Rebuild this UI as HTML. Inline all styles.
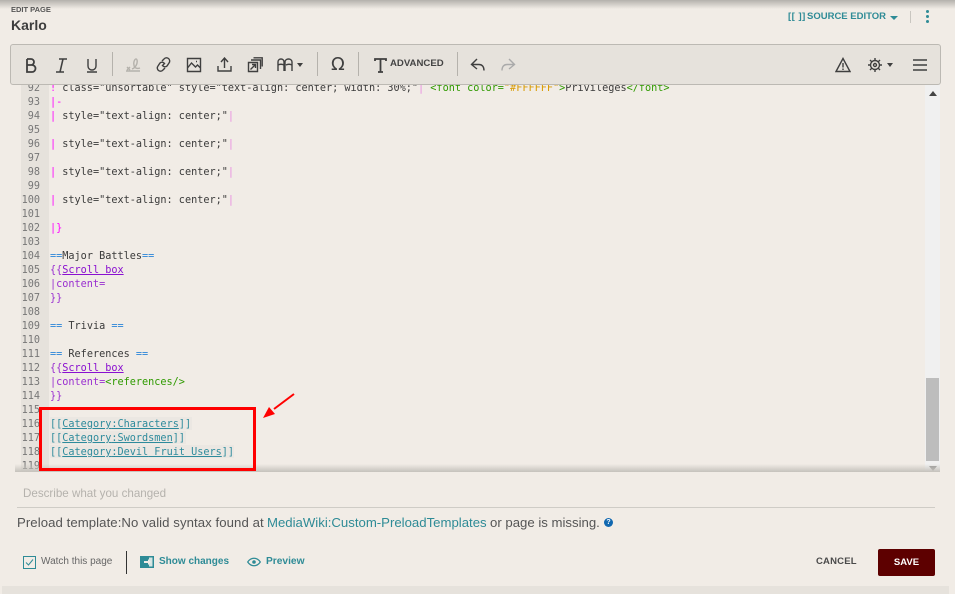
<!DOCTYPE html>
<html><head><meta charset="utf-8">
<style>
html,body{margin:0;padding:0}
body{width:955px;height:594px;overflow:hidden;background:#f1ece6;position:relative;font-family:"Liberation Sans",sans-serif;color:#4a4a4a}
.a{position:absolute;white-space:nowrap}
#code{position:absolute;left:21px;top:84px;width:905px;height:387px;overflow:hidden;font:10.2px/14px "DejaVu Sans Mono",monospace;color:#3a3a3a}
#gut{position:absolute;left:0;top:0;width:28px;height:387px;background:#e6e2dc}
.l{position:absolute;left:0;height:14px;white-space:pre;margin-top:2px}
.n{position:absolute;left:0;width:19px;text-align:right;color:#777}
.c{position:absolute;left:29px}
.m{color:#f0f}.p{color:#e98be0}.b{color:#2a85d8}.v{color:#9a2fd0}.vu{color:#8a10d0;text-decoration:underline}.g{color:#2f9a00}.o{color:#d89a00}
.t{color:#2e8b9c}.tu{color:#2e8b9c;text-decoration:underline}
.s{background:repeating-linear-gradient(90deg,#e53935 0 2px,transparent 2px 4px) left 12px/100% 1px no-repeat}
svg{position:absolute;fill:none;stroke:#3f3f3f;stroke-width:1.4}
.sep{position:absolute;top:52px;width:1px;height:24px;background:#b5b2ac}
.pre{top:515px;font-size:13.18px;color:#555}
</style></head><body>
<div class="a" style="left:0;top:0;width:955px;height:9px;background:linear-gradient(#b4b1ac,#f1ece6)"></div>
<div class="a" style="left:11px;top:5px;font-size:7.5px;font-weight:bold;color:#555">EDIT PAGE</div>
<div class="a" style="left:11px;top:17px;font-size:14px;font-weight:bold;color:#3d3d3d">Karlo</div>
<div class="a" style="left:788px;top:11px;font-size:9.5px;font-weight:bold;color:#2e8b96;letter-spacing:.5px">[[ ]]</div>
<div class="a" style="left:807px;top:11px;font-size:9.5px;font-weight:bold;color:#2e8b96">SOURCE EDITOR</div>
<div class="a" style="left:890px;top:16px;border:4px solid transparent;border-top:4px solid #2e8b96;border-bottom:0"></div>
<div class="a" style="left:910px;top:11px;width:1px;height:12px;background:#c9c6c0"></div>
<div class="a" style="left:926px;top:10px;width:3px;height:3px;background:#2e8b96;border-radius:50%;box-shadow:0 5px #2e8b96,0 10px #2e8b96"></div>

<div id="code">
<div id="gut"></div>
<div class="l" style="top:-4px"><span class="n">92</span><span class="c"><span class="m">!</span> class="unsortable" style="text-align: center; width: 30%;"<span class="p">|</span> <span class="g">&lt;font</span> <span class="g">color=</span><span class="o">"#FFFFFF"</span><span class="g">&gt;</span>Privileges<span class="g">&lt;/font&gt;</span></span></div>
<div class="l" style="top:10px"><span class="n">93</span><span class="c"><span class="m">|-</span></span></div>
<div class="l" style="top:24px"><span class="n">94</span><span class="c"><span class="m">|</span> style="text-align: center;"<span class="p">|</span></span></div>
<div class="l" style="top:38px"><span class="n">95</span></div>
<div class="l" style="top:52px"><span class="n">96</span><span class="c"><span class="m">|</span> style="text-align: center;"<span class="p">|</span></span></div>
<div class="l" style="top:66px"><span class="n">97</span></div>
<div class="l" style="top:80px"><span class="n">98</span><span class="c"><span class="m">|</span> style="text-align: center;"<span class="p">|</span></span></div>
<div class="l" style="top:94px"><span class="n">99</span></div>
<div class="l" style="top:108px"><span class="n">100</span><span class="c"><span class="m">|</span> style="text-align: center;"<span class="p">|</span></span></div>
<div class="l" style="top:122px"><span class="n">101</span></div>
<div class="l" style="top:136px"><span class="n">102</span><span class="c"><span class="m">|}</span></span></div>
<div class="l" style="top:150px"><span class="n">103</span></div>
<div class="l" style="top:164px"><span class="n">104</span><span class="c"><span class="b">==</span>Major Battles<span class="b">==</span></span></div>
<div class="l" style="top:178px"><span class="n">105</span><span class="c"><span class="v">{{</span><span class="vu">Scroll box</span></span></div>
<div class="l" style="top:192px"><span class="n">106</span><span class="c"><span class="v">|content=</span></span></div>
<div class="l" style="top:206px"><span class="n">107</span><span class="c"><span class="v">}}</span></span></div>
<div class="l" style="top:220px"><span class="n">108</span></div>
<div class="l" style="top:234px"><span class="n">109</span><span class="c"><span class="b">==</span> Trivia <span class="b">==</span></span></div>
<div class="l" style="top:248px"><span class="n">110</span></div>
<div class="l" style="top:262px"><span class="n">111</span><span class="c"><span class="b">==</span> References <span class="b">==</span></span></div>
<div class="l" style="top:276px"><span class="n">112</span><span class="c"><span class="v">{{</span><span class="vu">Scroll box</span></span></div>
<div class="l" style="top:290px"><span class="n">113</span><span class="c"><span class="v">|content=</span><span class="g">&lt;references/&gt;</span></span></div>
<div class="l" style="top:304px"><span class="n">114</span><span class="c"><span class="v">}}</span></span></div>
<div class="l" style="top:318px"><span class="n">115</span></div>
<div class="a" style="left:29px;top:333px;width:142px;height:13px;background:#ebe7e2"></div>
<div class="a" style="left:29px;top:347px;width:136px;height:13px;background:#ebe7e2"></div>
<div class="a" style="left:29px;top:361px;width:184px;height:13px;background:#ebe7e2"></div>
<div class="l" style="top:332px"><span class="n">116</span><span class="c"><span class="t">[[</span><span class="tu"><span class="s">Category</span>:<span class="s">Characters</span></span><span class="t">]]</span></span></div>
<div class="l" style="top:346px"><span class="n">117</span><span class="c"><span class="t">[[</span><span class="tu"><span class="s">Category</span>:<span class="s">Swordsmen</span></span><span class="t">]]</span></span></div>
<div class="l" style="top:360px"><span class="n">118</span><span class="c"><span class="t">[[</span><span class="tu"><span class="s">Category</span>:<span class="s">Devil</span> Fruit Users</span><span class="t">]]</span></span></div>
<div class="l" style="top:374px"><span class="n">119</span></div>
</div>

<!-- scrollbar -->
<div class="a" style="left:925px;top:84px;width:15px;height:387px;background:#f0f0f0"></div>
<div class="a" style="left:926px;top:378px;width:13px;height:83px;background:#bdbdbd"></div>
<div class="a" style="left:929px;top:91px;border:4px solid transparent;border-bottom:5px solid #444;border-top:0"></div>
<div class="a" style="left:929px;top:466px;border:4px solid transparent;border-top:5px solid #999;border-bottom:0"></div>
<div class="a" style="left:15px;top:464px;width:925px;height:8px;background:linear-gradient(rgba(241,236,230,0),#c5c2bc)"></div>

<!-- toolbar -->
<div class="a" style="left:10px;top:44px;width:929px;height:39px;background:#e6e2dc;border:1px solid #bcb9b3;border-radius:3px"></div>
<svg style="left:25px;top:58px;stroke-width:1.8" width="12" height="15" viewBox="0 0 12 15"><path d="M2 1v13h5a3 3 0 0 0 0-7H2M2 1h4a3 3 0 0 1 0 6"/></svg>
<svg style="left:55px;top:58px;stroke-width:1.6" width="13" height="15" viewBox="0 0 13 15"><path d="M4 1h8M1 14h8M8 1L5 14"/></svg>
<svg style="left:86px;top:58px" width="12" height="15" viewBox="0 0 12 15"><path d="M2 1v7a4 4 0 0 0 8 0V1M1 14h10"/></svg>
<div class="sep" style="left:112px"></div>
<svg style="left:125px;top:57px;stroke:#b4b1ab" width="16" height="16" viewBox="0 0 16 16"><path d="M1 14h14M2 10l3 3M5 10l-3 3M7 12c3-1 6-5 5-9-1-3-4 1-3 5 0 3 3 4 6 3"/></svg>
<svg style="left:156px;top:57px" width="15" height="15" viewBox="0 0 15 15"><path d="M6 9l3-3M6 4l2-2a3 3 0 0 1 5 4l-2 3a3 3 0 0 1-4 0M9 11l-2 2a3 3 0 0 1-5-4l2-3a3 3 0 0 1 4 0"/></svg>
<svg style="left:186px;top:57px" width="16" height="16" viewBox="0 0 16 16"><path d="M1.5 1.5h13v13h-13zM1.5 11l4-5 4 4 2-2 3 3M10 4.5h1"/></svg>
<svg style="left:217px;top:57px" width="15" height="15" viewBox="0 0 15 15"><path d="M1 9v5h13V9M7.5 11V2M4 5l3.5-4L11 5"/></svg>
<svg style="left:247px;top:57px" width="16" height="16" viewBox="0 0 16 16"><path d="M1.5 5.500h9v9h-9zM4 3h9.500v9M6.500 .8h8.700v8.700M3.500 12.500l5-5M5 7.500h3.500V11"/></svg>
<svg style="left:277px;top:58px" width="16" height="14" viewBox="0 0 16 14"><path d="M1 13V4c0-4 6-4 6 0v9M1 7c2-1 4-1 6 0M8 13V4c0-4 7-4 7 0v9M9 7c2-1 4-1 6 0"/></svg>
<div class="a" style="left:297px;top:63px;border:3.500px solid transparent;border-top:4px solid #3f3f3f;border-bottom:0"></div>
<div class="sep" style="left:317px"></div>
<div class="a" style="left:331px;top:54px;font:18px 'DejaVu Sans',sans-serif;color:#3f3f3f">Ω</div>
<div class="sep" style="left:358px"></div>
<svg style="left:374px;top:58px;stroke-width:1.8" width="13" height="15" viewBox="0 0 13 15"><path d="M1 3V1h11v2M6.500 1v13M4 14h5"/></svg>
<div class="a" style="left:390px;top:58px;font-size:9.6px;font-weight:bold;color:#444">ADVANCED</div>
<div class="sep" style="left:457px"></div>
<svg style="left:470px;top:57px" width="16" height="16" viewBox="0 0 16 16"><path d="M7 2L1.500 7.500 7 12M1.500 7.500H9c3 0 5 2 5 6"/></svg>
<svg style="left:500px;top:57px;stroke:#aaa" width="16" height="16" viewBox="0 0 16 16"><path d="M9 2l5.500 5.500L9 12M14.500 7.500H7c-3 0-5 2-5 6"/></svg>
<svg style="left:835px;top:57px" width="16" height="16" viewBox="0 0 16 16"><path d="M8 1.500L1 14.500h14zM8 6v4.500M8 11.500v1.500"/></svg>
<svg style="left:868px;top:58px" width="14" height="14" viewBox="0 0 14 14"><circle cx="7" cy="7" r="4.500"/><circle cx="7" cy="7" r="1.500"/><path d="M7 0v2.500M7 11.500V14M0 7h2.500M11.500 7H14M2 2l2 2M10 10l2 2M12 2l-2 2M4 10l-2 2"/></svg>
<div class="a" style="left:887px;top:63px;border:3.500px solid transparent;border-top:4px solid #3f3f3f;border-bottom:0"></div>
<svg style="left:913px;top:59px" width="14" height="12" viewBox="0 0 14 12"><path d="M0 1h14M0 6h14M0 11h14"/></svg>

<!-- highlight -->
<div class="a" style="left:39px;top:407px;width:211px;height:58px;border:3px solid #f00"></div>
<svg style="left:260px;top:390px;stroke:none" width="38" height="30" viewBox="0 0 38 30"><path d="M34 4L14 19" style="stroke:#f00;stroke-width:2"/><path d="M3 28l6-11 6 7z" style="fill:#f00"/></svg>

<!-- summary -->
<div class="a" style="left:23px;top:487px;font-size:11.6px;color:#b5b2ad">Describe what you changed</div>
<div class="a" style="left:17px;top:507px;width:918px;height:1px;background:#cfccc6"></div>
<div class="a pre" style="left:17px;letter-spacing:.07px">Preload template:No valid syntax found at</div>
<div class="a pre" style="left:267px;color:#2e8b96">MediaWiki:Custom-PreloadTemplates</div>
<div class="a pre" style="left:490px">or page is missing.</div>
<div class="a" style="left:604px;top:518px;width:9px;height:9px;border-radius:50%;background:#1168b0;color:#fff;font:bold 7px/9px 'Liberation Sans',sans-serif;text-align:center">?</div>

<!-- footer -->
<div class="a" style="left:23px;top:556px;width:11px;height:11px;border:1px solid #2e8b96"></div>
<svg style="left:25px;top:558px;stroke:#2e8b96;stroke-width:1" width="9" height="9" viewBox="0 0 9 9"><path d="M1 4.500l2.500 2.500L8 1.500"/></svg>
<div class="a" style="left:41px;top:556px;font-size:10px;color:#666">Watch this page</div>
<div class="a" style="left:126px;top:551px;width:1px;height:23px;background:#333"></div>
<svg style="left:140px;top:556px;stroke:none" width="14" height="12" viewBox="0 0 14 12"><path d="M0 0h14v12H0z" style="fill:#2e8b96"/><path d="M9 1.500h3.500v9H9z" style="fill:#d5e5e3"/><path d="M4 5h4V3l3 3-3 3V7H4z" style="fill:#f1ece6"/></svg>
<div class="a" style="left:159px;top:556px;font-size:10px;font-weight:bold;color:#2e8b96">Show changes</div>
<svg style="left:247px;top:556px;stroke:#2e8b96;stroke-width:1.2" width="14" height="12" viewBox="0 0 14 12"><path d="M.7 6C4 1 10 1 13.300 6 10 11 4 11 .7 6z"/><circle cx="7" cy="6" r="1.200" style="fill:#2e8b96"/></svg>
<div class="a" style="left:266px;top:556px;font-size:10.2px;font-weight:bold;color:#2e8b96">Preview</div>
<div class="a" style="left:816px;top:556px;font-size:9.5px;font-weight:bold;color:#4a4a4a;letter-spacing:.2px">CANCEL</div>
<div class="a" style="left:878px;top:549px;width:57px;height:27px;background:#5d0000;border-radius:2px;color:#fff;font-size:9.5px;font-weight:bold;text-align:center;line-height:27px">SAVE</div>
<div class="a" style="left:2px;top:586px;width:947px;height:8px;background:#e6e2dc"></div>
</body></html>
